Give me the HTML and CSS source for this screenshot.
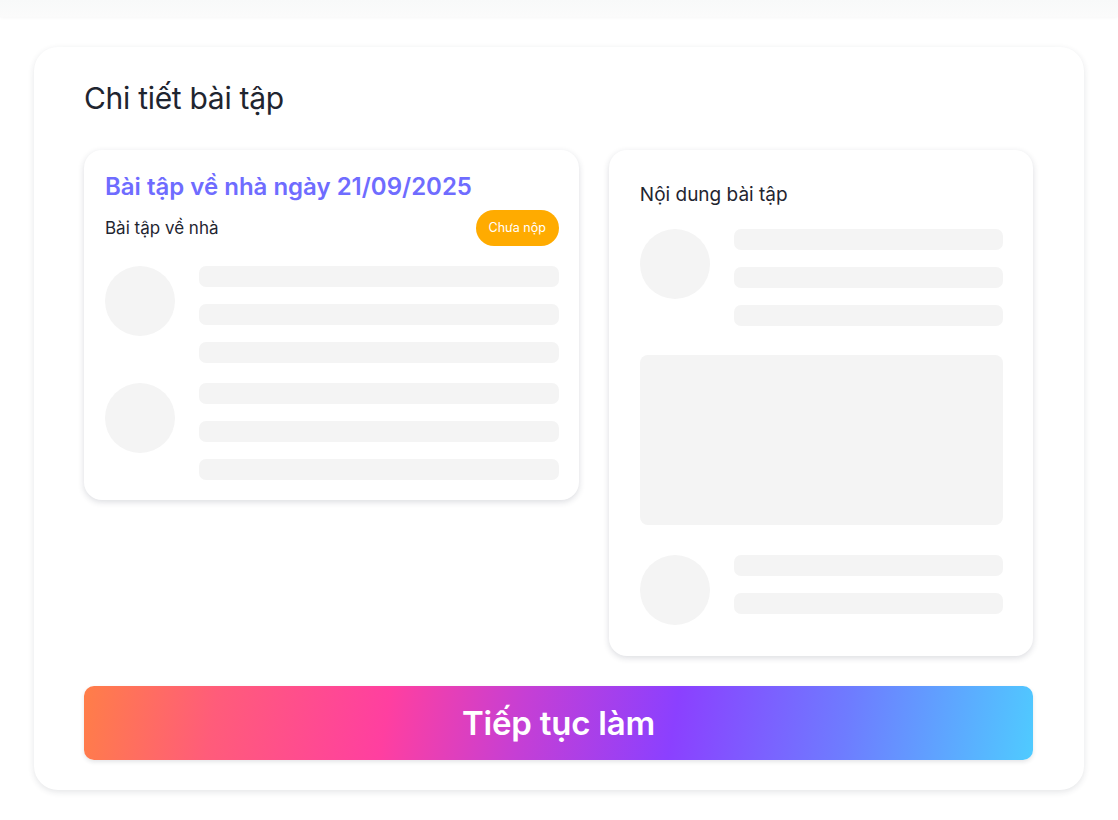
FILE: index.html
```html
<!DOCTYPE html>
<html lang="vi">
<head>
    <meta charset="UTF-8">
    <meta name="viewport" content="width=device-width, initial-scale=1.0">
    <title>Chi tiết bài tập</title>
    <link rel="stylesheet" href="styles.css">
</head>
<body>

    <div class="topbar"></div>

    <div class="wrapper">
        <div class="panel">
            <h1>Chi tiết bài tập</h1>

            <div class="columns">
                <div class="card card-left">
                    <h2 class="hw-title">Bài tập về nhà ngày 21/09/2025</h2>
                    <div class="hw-meta">
                        <span>Bài tập về nhà</span>
                        <span class="badge">Chưa nộp</span>
                    </div>

                    <div class="sk-row">
                        <div class="sk-avatar"></div>
                        <div class="sk-lines">
                            <div class="sk-line"></div>
                            <div class="sk-line"></div>
                            <div class="sk-line"></div>
                        </div>
                    </div>
                    <div class="sk-row">
                        <div class="sk-avatar"></div>
                        <div class="sk-lines">
                            <div class="sk-line"></div>
                            <div class="sk-line"></div>
                            <div class="sk-line"></div>
                        </div>
                    </div>
                </div>

                <div class="card card-right">
                    <h3 class="content-title">Nội dung bài tập</h3>
                    <div class="sk-row">
                        <div class="sk-avatar"></div>
                        <div class="sk-lines">
                            <div class="sk-line"></div>
                            <div class="sk-line"></div>
                            <div class="sk-line"></div>
                        </div>
                    </div>
                    <div class="sk-block"></div>
                    <div class="sk-row">
                        <div class="sk-avatar"></div>
                        <div class="sk-lines">
                            <div class="sk-line"></div>
                            <div class="sk-line"></div>
                        </div>
                    </div>
                </div>
            </div>

            <button class="continue-btn">Tiếp tục làm</button>
        </div>
    </div>

</body>
</html>
```

FILE: styles.css
```css
body {
    font-family: Inter, "Noto Sans", sans-serif;
    background: #ffffff;
    margin: 0;
    padding: 0;
    color: #1f2530;
}
.topbar {
    height: 17px;
    background: linear-gradient(#f8f9f9, #fbfbfb);
    box-shadow: 0 1px 3px rgba(0, 0, 0, 0.03);
}
.wrapper {
    padding: 30px 34px;
}
.panel {
    background: white;
    border-radius: 24px;
    padding: 30px 51px 30px 50px;
    box-shadow: 0 2px 6px rgba(30, 40, 60, 0.12);
}
h1 {
    margin: 0 0 30px 0;
    font-size: 30px;
    font-weight: 400;
    line-height: 43px;
    letter-spacing: -0.3px;
    color: #1f2530;
}
.columns {
    display: grid;
    grid-template-columns: 7fr 6fr;
    gap: 30px;
    align-items: start;
}
.card {
    background: white;
    border-radius: 18px;
    box-shadow: 0 2px 6px rgba(30, 40, 60, 0.16);
}
.card-left {
    padding: 20px 20px 20px 21px;
}
.card-right {
    padding: 30px 30px 31px 31px;
}
.hw-title {
    margin: 0;
    font-size: 24px;
    font-weight: 600;
    line-height: 34px;
    color: #6f6cff;
    letter-spacing: 0;
}
.hw-meta {
    display: flex;
    justify-content: space-between;
    align-items: center;
    margin: 6px 0 20px 0;
    font-size: 17px;
}
.badge {
    background: #ffab00;
    color: white;
    font-size: 12.5px;
    height: 36px;
    line-height: 36px;
    padding: 0 13px;
    border-radius: 18px;
}
.content-title {
    margin: 0 0 19px 0;
    font-size: 19px;
    font-weight: 400;
    line-height: 30px;
}
.sk-row {
    display: flex;
    gap: 24px;
    margin-bottom: 20px;
}
.sk-row:last-child {
    margin-bottom: 0;
}
.sk-avatar {
    width: 70px;
    height: 70px;
    border-radius: 50%;
    background: #f4f4f4;
    flex-shrink: 0;
}
.sk-lines {
    flex: 1;
    display: flex;
    flex-direction: column;
    gap: 17px;
}
.sk-line {
    height: 21px;
    border-radius: 7px;
    background: #f4f4f4;
}
.sk-block {
    height: 170px;
    border-radius: 8px;
    background: #f4f4f4;
    margin: 29px 0 30px 0;
}
.continue-btn {
    display: block;
    width: 100%;
    height: 74px;
    margin-top: 30px;
    border: none;
    border-radius: 10px;
    background: linear-gradient(100deg, #ff7e48 0%, #ff5c7a 14%, #ff3fa0 32%, #c63fd4 46%, #8b40ff 62%, #6e7cff 80%, #4fcbff 100%);
    color: white;
    font-family: Inter, "Noto Sans", sans-serif;
    font-size: 33px;
    font-weight: 600;
    letter-spacing: -0.2px;
    box-shadow: 0 2px 4px rgba(30, 40, 60, 0.12);
    cursor: pointer;
}
```
